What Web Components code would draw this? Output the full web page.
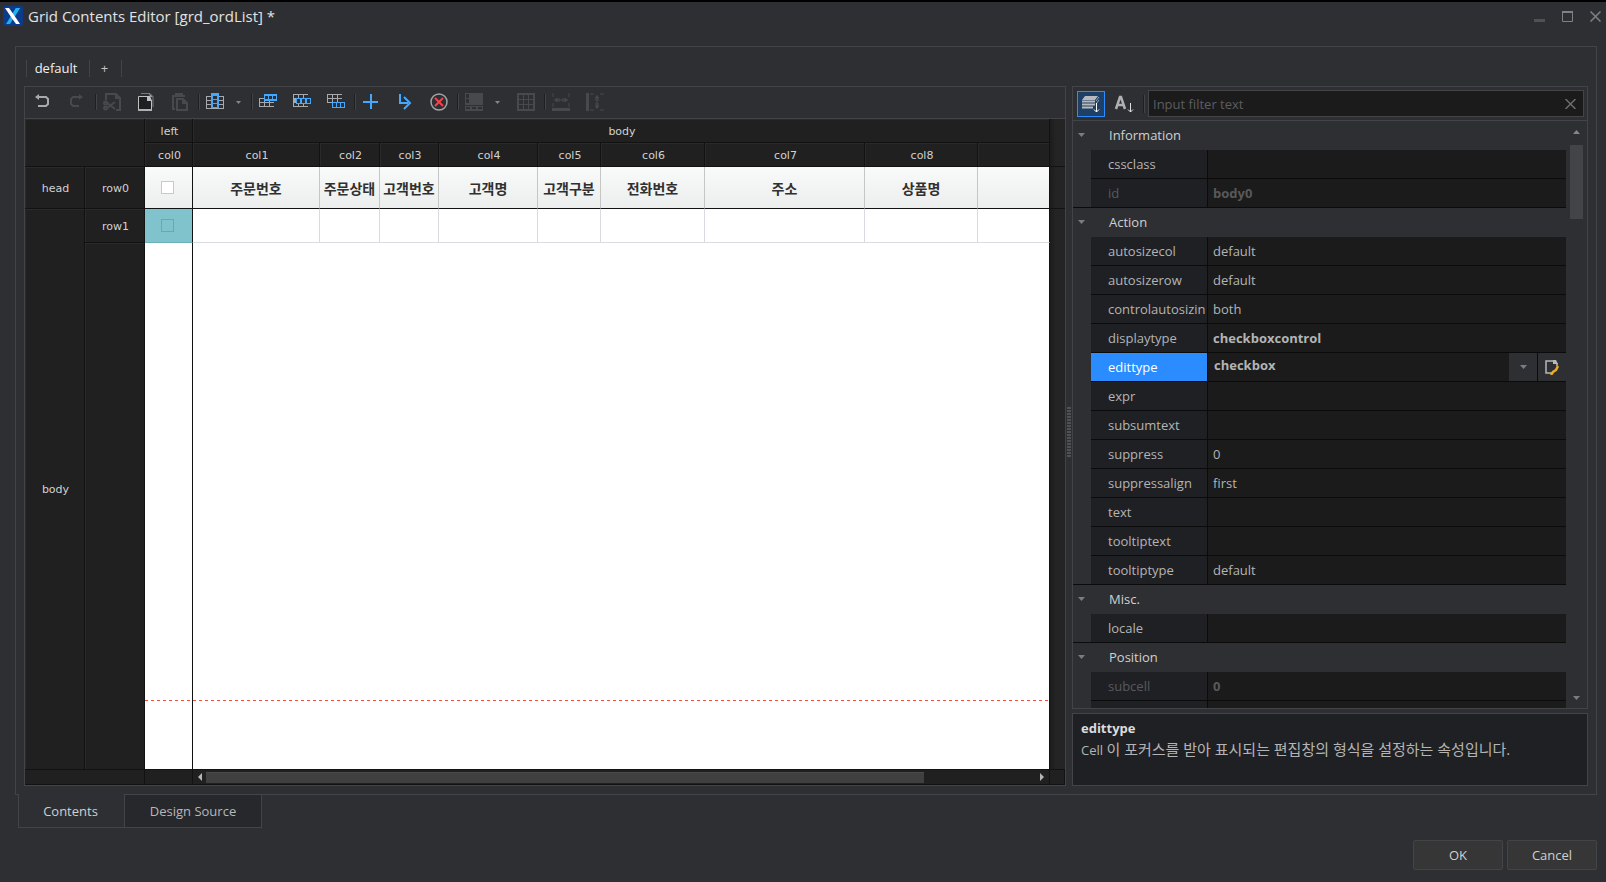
<!DOCTYPE html>
<html lang="ko">
<head>
<meta charset="utf-8">
<title>Grid Contents Editor</title>
<style>
  body { margin: 0; background: #2e2f33; color: #c8c8c8; font: 13px/18px "Open Sans", "Noto Sans CJK KR", sans-serif; }
</style>
</head>
<body>
<editor-window></editor-window>

<script>
const BASE = `
  *, *::before, *::after { box-sizing: border-box; }
  button, input, select { font: inherit; color: inherit; margin: 0; }
  button { background: none; border: 0; padding: 0; }
  svg { display: block; }
`;

function define(name, html, setup) {
  const template = document.createElement('template');
  customElements.define(name, class extends HTMLElement {
    constructor() {
      super();
      const root = this.attachShadow({ mode: 'open' });
      const markup = typeof html === 'function' ? html(this) : html;
      template.innerHTML = `<style>${BASE}</style>${markup}`;
      root.append(template.content.cloneNode(true));
    }
  });
}

/* ---------- icons, on an 18 x 18 pixel grid ---------- */
const GRAY = '#a9a9a9', DIM = '#48494c', BLUE = '#44a8ff';
/* a block of cells: each cell is cut out of a filled rectangle */
const cells = (x, y, xs, ys, w, h, total, color) => {
  let svg = `<path d="M${x} ${y}h${total[0]}v${total[1]}h${-total[0]}z" fill="${color}"/>`;
  for (const cx of xs) for (const cy of ys) svg += `<path d="M${cx} ${cy}h${w}v${h}h${-w}z" fill="#2e2f33"/>`;
  return svg;
};
const ICONS = {
  undo: `<path d="M3 4h9l2 2v5l-2 2H4" fill="none" stroke="${GRAY}" stroke-width="2"/><path d="M1 4l4-3v6z" fill="${GRAY}"/>`,
  redo: `<path d="M12 4H5L3 6v5l2 2h6" fill="none" stroke="${DIM}" stroke-width="2"/><path d="M15 4l-4-3v6z" fill="${DIM}"/>`,
  cut: `<path d="M3 7V1h10l4 4v12h-4" fill="none" stroke="${DIM}" stroke-width="2"/><path d="M12 1v5h5" fill="${DIM}"/><path d="M3 9l9 7M3 16l9-7" stroke="${DIM}" stroke-width="2"/><circle cx="2.500" cy="10" r="1.500" fill="none" stroke="${DIM}" stroke-width="2"/><circle cx="2.500" cy="15" r="1.500" fill="none" stroke="${DIM}" stroke-width="2"/>`,
  copy: `<path d="M4 .5h9l3 3V14" fill="none" stroke="#77787a" stroke-width="1"/><path d="M1.500 3.500h9l4 4v9h-13z" fill="#1e1f22" stroke="#c0c0c0"/><path d="M1 16h14v2H1z" fill="#b0b0b0"/><path d="M10 3v5h5l-2-5z" fill="#c0c0c0"/><path d="M12 0l4 4h-3z" fill="#9a9a9c"/>`,
  paste: `<path d="M4 16H2V3h12" fill="none" stroke="${DIM}" stroke-width="2"/><path d="M4 0h8v3H4z" fill="${DIM}"/><path d="M6 6h6l4 4v7H6z" fill="none" stroke="${DIM}" stroke-width="2"/><path d="M11 5v6h5z" fill="${DIM}"/>`,
  columns: cells(0, 3, [1, 13], [4, 8, 12], 4, 3, [18, 13], GRAY) + cells(5, 0, [7], [3, 7, 11], 4, 3, [8, 15], BLUE),
  rowTop: cells(0, 5, [1, 6, 11], [6, 10], 4, 3, [15, 9], GRAY) + cells(5, 1, [6, 10, 14], [3], 3, 3, [13, 7], BLUE),
  rowMid: cells(0, 1, [1, 6, 11], [2, 10], 4, 3, [15, 13], GRAY) + cells(3, 5, [4, 9, 14], [6], 3, 4, [15, 6], BLUE),
  rowBottom: cells(0, 1, [1, 6, 11], [2, 6], 4, 3, [15, 9], GRAY) + cells(5, 9, [6, 10, 14], [10], 3, 4, [13, 6], BLUE),
  plus: `<path d="M9 1v15M1 9h15" stroke="${BLUE}" stroke-width="2"/>`,
  into: `<path d="M4 1v9h8" fill="none" stroke="${BLUE}" stroke-width="2"/><path d="M8 4l6 6-6 6" fill="none" stroke="${BLUE}" stroke-width="2"/>`,
  remove: `<circle cx="9" cy="9" r="8" fill="none" stroke="#a4a4a4" stroke-width="1.500"/><path d="M5 5l8 8M13 5l-8 8" stroke="#ff3d4d" stroke-width="2"/>`,
  merge: cells(0, 0, [1], [1, 6], 3, 4, [5, 12], DIM) + `<path d="M5 0h13v12H5z" fill="${DIM}"/>` + cells(0, 13, [1, 7, 13], [14], 4, 2, [18, 5], DIM),
  split: cells(0, 0, [2, 7, 12], [2, 7, 12], 4, 4, [18, 18], DIM),
  fitWidth: `<path d="M0 15h18v3H0z" fill="${DIM}"/><path d="M1 0v4M1 10v4M17 0v4M17 10v4" stroke="${DIM}"/><path d="M2 7h14M3 7l2-2v4zM15 7l-2-2v4zM7 5v4M11 5v4" stroke="${DIM}" fill="${DIM}"/>`,
  fitHeight: `<path d="M0 0h3v18H0z" fill="${DIM}"/><path d="M4 1h4M14 1h4M4 17h4M14 17h4" stroke="${DIM}"/><path d="M11 2v14M11 3l-2 2h4zM11 15l-2-2h4zM9 7h4M9 11h4" stroke="${DIM}" fill="${DIM}"/>`
};
const icon = (key) => `<svg width="18" height="18" viewBox="0 0 18 18" aria-hidden="true">${ICONS[key]}</svg>`;
const chevron = `<svg width="7" height="4" viewBox="0 0 7 4" aria-hidden="true"><path d="M0 0h7L3.500 4z" fill="#7b7c80"/></svg>`;
const smallChevron = `<svg width="5" height="3" viewBox="0 0 5 3" aria-hidden="true"><path d="M0 0h5L2.500 3z" fill="#85868a"/></svg>`;

define('tool-button', el => `
  <style>
    :host { display: block; width: 18px; height: 18px; }
    :host([kind="menu"]) { width: 8px; margin-left: -6px; }
    button { display: grid; place-items: center; width: 100%; height: 100%; }
  </style>
  <button type="button" aria-label="${el.getAttribute('label')}">${el.getAttribute('kind') === 'menu' ? smallChevron : icon(el.getAttribute('icon'))}</button>`);

define('tool-separator', `
  <style>:host { display: block; width: 2px; height: 16px; margin: 0 -10px 0 -7px; background: #1f2022; border-right: 1px solid #424346; }</style>`);

const tool = (key, label) => `<tool-button icon="${key}" label="${label}"></tool-button>`;
const menu = label => `<tool-button kind="menu" label="${label}"></tool-button>`;
const sep = '<tool-separator></tool-separator>';
define('edit-toolbar', () => `
  <style>:host { display: flex; align-items: center; gap: 16px; height: 32px; padding: 0 0 1px 9px; border-bottom: 1px solid #434448; }</style>
  ${tool('undo', 'Undo')}${tool('redo', 'Redo')}${sep}
  ${tool('cut', 'Cut')}${tool('copy', 'Copy')}${tool('paste', 'Paste')}${sep}
  ${tool('columns', 'Add column')}${menu('Column options')}${sep}
  ${tool('rowTop', 'Add head row')}${tool('rowMid', 'Add body row')}${tool('rowBottom', 'Add summary row')}${sep}
  ${tool('plus', 'Add')}${tool('into', 'Insert')}${tool('remove', 'Delete')}${sep}
  ${tool('merge', 'Merge cells')}${menu('Merge options')}${tool('split', 'Split cells')}${sep}
  ${tool('fitWidth', 'Fit width')}${tool('fitHeight', 'Fit height')}`);

/* ---------- grid being edited ---------- */
const COLUMNS = [['주문번호', 127], ['주문상태', 60], ['고객번호', 59], ['고객명', 99], ['고객구분', 63], ['전화번호', 104], ['주소', 160], ['상품명', 113]];
define('contents-grid', () => `
  <style>
    :host { display: grid; min-height: 0; flex: 1; background: #202020; }
    table { width: 100%; height: 100%; table-layout: fixed; border-collapse: separate; border-spacing: 0; }
    th, td { padding: 0; text-align: center; vertical-align: middle; overflow: hidden; white-space: nowrap; border: solid #121212; border-width: 0 1px 1px 0; }
    th { padding: 2px 0 0 2px; font: 11px/14px "DejaVu Sans", sans-serif; color: #d2d2d2; background: #202020; box-shadow: inset 1px 1px #2a2a2a; }
    .h24 { height: 24px; }
    .h42 { height: 42px; }
    .h34 { height: 34px; }
    .h15 { height: 15px; }
    .head td { background: linear-gradient(#f9fafa, #eceeee); border-right-color: #c6c6c6; font: bold 14px/18px "Noto Sans CJK KR", sans-serif; color: #303030; }
    .row td { background: #fff; border-color: #d9dbe1; }
    .canvas td { background: #fff repeating-linear-gradient(90deg, #f4503c 0 3px, #fff 3px 6px) 0 calc(100% - 68px) / 100% 1px no-repeat; }
    tr td.fixed, tr td.last { border-right: 1px solid #121212; }
    .row td.selected { background: #80c3cd; border-bottom-color: #6cb0ba; }
    tr td.gutter { background: linear-gradient(90deg, #1c1c1c, #242424 6px); border-color: transparent; border-right-width: 0; }
    tr.line td.gutter { border-bottom-color: #121212; }
    input { appearance: none; display: block; width: 13px; height: 13px; margin: 0 auto; border: 1px solid #c9c9c9; background: #fff; }
    .fixed label { display: block; padding-right: 2px; }
    .selected input { background: transparent; border-color: #66a9b3; }
    .foot td { background: #202020; }
    .scroll { display: flex; align-items: center; height: 14px; padding: 0 5px; gap: 4px; }
    .track { flex: 1; height: 11px; }
    .track i { display: block; width: 718px; max-width: 88%; height: 11px; background: #404040; border-top: 1px solid #4a4a4a; }
  </style>
  <table>
    <colgroup><col style="width:60px"><col style="width:60px"><col style="width:48px">${COLUMNS.map(c => `<col style="width:${c[1]}px">`).join('')}<col><col style="width:15px"></colgroup>
    <tbody>
      <tr class="h24"><th colspan="2" rowspan="2"></th><th>left</th><th colspan="9">body</th><td class="gutter"></td></tr>
      <tr class="h24 line"><th>col0</th>${COLUMNS.map((c, i) => `<th>col${i + 1}</th>`).join('')}<th></th><td class="gutter"></td></tr>
      <tr class="h42 head line"><th>head</th><th>row0</th><td class="fixed"><label><input type="checkbox" aria-label="Select all"></label></td>${COLUMNS.map(c => `<td>${c[0]}</td>`).join('')}<td class="last"></td><td class="gutter"></td></tr>
      <tr class="h34 row"><th rowspan="2">body</th><th>row1</th><td class="fixed selected"><label><input type="checkbox" aria-label="Select row"></label></td>${COLUMNS.map(() => '<td></td>').join('')}<td class="last"></td><td class="gutter"></td></tr>
      <tr class="canvas line"><th></th><td class="fixed"></td><td colspan="9" class="last"></td><td class="gutter"></td></tr>
      <tr class="h15 foot"><td colspan="2"></td><td></td><td colspan="9"><div class="scroll">
        <svg width="4" height="8" viewBox="0 0 4 8"><path d="M4 0v8L0 4z" fill="#b5b5b5"/></svg>
        <div class="track"><i></i></div>
        <svg width="4" height="8" viewBox="0 0 4 8"><path d="M0 0v8l4-4z" fill="#b5b5b5"/></svg>
      </div></td><td></td></tr>
    </tbody>
  </table>`);

/* ---------- property sheet ---------- */
const GROUPS = [
  ['Information', [['cssclass', ''], ['id', 'body0', 'off']]],
  ['Action', [['autosizecol', 'default'], ['autosizerow', 'default'], ['controlautosizin', 'both'], ['displaytype', 'checkboxcontrol', 'set'],
    ['edittype', 'checkbox', 'active'], ['expr', ''], ['subsumtext', ''], ['suppress', '0'], ['suppressalign', 'first'], ['text', ''], ['tooltiptext', ''], ['tooltiptype', 'default']]],
  ['Misc.', [['locale', '']]],
  ['Position', [['subcell', '0', 'off'], ['', '']]]
];
const editor = value => `<div class="editor">
  <select aria-label="edittype"><option>${value}</option></select><span class="arrow">${chevron}</span>
  <button type="button" aria-label="Edit value"><svg width="14" height="16" viewBox="0 0 14 16"><path d="M7 14H1V2h8l3 3v2" fill="none" stroke="#b8b8b8" stroke-width="1.500"/><path d="M8 1v4h5l-2-4z" fill="#b8b8b8"/><path d="M13 7l-2 4-3 2-2 3" fill="none" stroke="#f0aa22" stroke-width="2.500"/></svg></button></div>`;

define('property-group', el => {
  const [title, rows] = GROUPS[+el.getAttribute('index')];
  return `
  <style>
    :host { display: block; border-bottom: 1px solid #0b0b0c; }
    .title { display: flex; align-items: center; width: 100%; height: 29px; padding: 0 0 2px 5px; gap: 24px; color: #d0d0d0; text-align: left; }
    .body { padding-left: 18px; }
    table { width: 100%; table-layout: fixed; border-collapse: separate; border-spacing: 0; }
    th, td { height: 29px; padding: 0 0 0 5px; border-bottom: 1px solid #0b0b0c; white-space: nowrap; text-align: left; font-weight: normal; color: #b4b4b4; }
    th { width: 117px; padding-left: 17px; background: #1f2024; border-right: 1px solid #0b0b0c; }
    td { background: #1b1b1b; }
    tr:last-child > * { height: 28px; border-bottom: 0; }
    .off > * { color: #58595b; }
    .off td, .set td, .active td { font-weight: bold; }
    .active th { background: #2a8cff; color: #fff; }
    .active td { padding: 0; }
    .editor { display: grid; grid-template-columns: 1fr 29px 28px; height: 28px; }
    select { grid-area: 1 / 1 / 2 / 3; appearance: none; border: 0; background: #1b1b1b; padding: 0 6px 4px; height: 28px; border-radius: 0; }
    .arrow { grid-area: 1 / 2; display: grid; place-items: center; background: #2e2f33; border-right: 1px solid #0b0b0c; pointer-events: none; }
    .editor button { display: grid; place-items: center; background: #2e2f33; }
  </style>
  <button type="button" class="title">${chevron}<span>${title}</span></button>
  <div class="body"><table>${rows.map(([k, v, c]) => `<tr class="${c || ''}"><th scope="row">${k}</th><td>${c === 'active' ? editor(v) : v}</td></tr>`).join('')}</table></div>`;
});

define('property-panel', () => `
  <style>
    :host { display: flex; flex-direction: column; gap: 4px; width: 516px; min-height: 0; }
    .sheet { flex: 1; min-height: 0; display: flex; flex-direction: column; border: 1px solid #434448; }
    .filter { display: flex; align-items: center; height: 34px; flex: none; padding: 0 3px 0 4px; border-bottom: 1px solid #434448; }
    .filter > button { width: 28px; height: 26px; display: grid; place-items: center; }
    .filter > button.on { background: #1f4066; border: 1px solid #2a8cff; }
    .filter > button.alpha { width: 38px; }
    .filter > i { width: 2px; height: 18px; margin-right: 3px; background: #1f2022; border-right: 1px solid #424346; }
    .box { flex: 1; display: flex; align-items: center; height: 27px; background: #1b1b1b; border: 1px solid #434448; padding: 0 7px 0 4px; }
    input { flex: 1; min-width: 0; padding: 0; background: none; border: 0; outline: 0; }
    input::placeholder { color: #5c5d60; opacity: 1; }
    .view { flex: 1; min-height: 0; display: flex; }
    .list { flex: 1; overflow: hidden; }
    .scroll { width: 21px; display: flex; flex-direction: column; align-items: center; padding: 9px 0 8px; }
    .thumb { width: 13px; height: 74px; margin: 11px 0 auto; background: #434448; }
    .note { height: 73px; padding: 5px 8px; border: 1px solid #434448; background: #1f2024; color: #b4b4b4; line-height: 24px; }
    .note strong { display: block; line-height: 18px; color: #dcdcdc; }
    .note p { margin: 0; }
    .note span { font-size: 15px; }
  </style>
  <section class="sheet">
    <div class="filter">
      <button type="button" class="on" aria-label="Group by category"><svg width="20" height="18" viewBox="0 0 20 18"><path d="M4 1h13l-3 4H1z" fill="#b9b9bb"/><path d="M1 6.500h13M1 9.500h13M1 12.500h11" stroke="#b9b9bb" stroke-width="2"/><path d="M18 2l-3 4M18 5l-3 4" stroke="#8fa0b4"/><path d="M15.500 8v9M13 14.500l2.500 2.500 2.500-2.500" fill="none" stroke="#fff"/></svg></button>
      <button type="button" class="alpha" aria-label="Sort by name"><svg width="20" height="18" viewBox="0 0 20 18"><path d="M2 14L6 2h1l4 12M4 10h5" fill="none" stroke="#b0b0b0" stroke-width="2.500"/><path d="M16.500 8v9M14 14.500l2.500 2.500 2.500-2.500" fill="none" stroke="#e0e0e0"/></svg></button>
      <i></i>
      <label class="box"><input type="text" placeholder="Input filter text" aria-label="Input filter text"><button type="button" aria-label="Clear filter"><svg width="11" height="10" viewBox="0 0 11 10"><path d="M.5 0l10 10M10.500 0l-10 10" stroke="#6c6d70" stroke-width="1.500"/></svg></button></label>
    </div>
    <div class="view">
      <div class="list">${GROUPS.map((g, i) => `<property-group index="${i}"></property-group>`).join('')}</div>
      <div class="scroll"><svg width="7" height="4" viewBox="0 0 7 4"><path d="M0 4h7L3.500 0z" fill="#85868a"/></svg><div class="thumb"></div>${chevron}</div>
    </div>
  </section>
  <section class="note"><strong>edittype</strong><p>Cell <span>이 포커스를 받아 표시되는 편집창의 형식을 설정하는 속성입니다.</span></p></section>`);

/* ---------- window ---------- */
define('title-bar', `
  <style>
    :host { display: flex; align-items: center; height: 28px; margin-bottom: 16px; padding: 0 5px 0 3px; color: #e2e2e2; }
    h1 { flex: 1; margin: 0 0 0 5px; font: 15px/20px "Open Sans", sans-serif; }
    .logo { align-self: flex-start; margin-top: 4px; }
    nav { display: flex; gap: 17px; align-items: center; }
  </style>
  <svg class="logo" width="20" height="20" viewBox="0 0 20 20" aria-hidden="true"><rect width="20" height="20" rx="2" fill="#0d3b8c"/><path d="M13 2h4L7 18H3z" fill="#1db0ee"/><path d="M2 2h4l5 7 6 9h-4L8 11z" fill="#fff"/><path d="M13 2h4l-5 8-2-3z" fill="#22b4f0"/></svg>
  <h1><slot></slot></h1>
  <nav>
    <button type="button" aria-label="Minimize"><svg width="11" height="11"><path d="M0 8h11v3H0z" fill="#505154"/></svg></button>
    <button type="button" aria-label="Maximize"><svg width="11" height="11"><path d="M.5 1v9.500h10V1" fill="none" stroke="#808184"/><path d="M0 1h11" stroke="#808184" stroke-width="2"/></svg></button>
    <button type="button" aria-label="Close"><svg width="11" height="11"><path d="M.5 .5l10 10M10.500 .5l-10 10" stroke="#808184" stroke-width="1.500"/></svg></button>
  </nav>`);

define('format-tabs', `
  <style>
    :host { display: flex; align-items: center; height: 39px; padding: 3px 0 0 2px; }
    button { height: 17px; line-height: 17px; border-left: 1px solid #434448; color: #f0f0f0; text-align: center; }
    .tab { width: 63px; padding-right: 4px; }
    .add { width: 33px; padding-right: 2px; border-right: 1px solid #434448; color: #c4c4c4; }
  </style>
  <button type="button" class="tab">default</button><button type="button" class="add" aria-label="+">+</button>`);

define('page-tabs', `
  <style>
    :host { display: flex; margin: -1px 0 0 18px; }
    button { height: 34px; border: 1px solid #434448; color: #b8b8b8; }
    .current { width: 106px; padding-right: 2px; border-width: 0 0 1px 1px; background: #2e2f33; color: #d0d0d0; }
    .other { width: 138px; background: #27282c; }
  </style>
  <button type="button" class="current">Contents</button><button type="button" class="other">Design Source</button>`);

define('dialog-actions', `
  <style>
    :host { display: flex; justify-content: flex-end; gap: 4px; padding: 12px 9px; }
    button { width: 90px; height: 30px; border: 1px solid #434448; border-radius: 2px; background: #363636; color: #d0d0d0; }
  </style>
  <button type="button">OK</button><button type="button">Cancel</button>`);

define('split-handle', `
  <style>
    :host { display: flex; align-items: center; justify-content: center; width: 6px; padding-bottom: 8px; }
    i { width: 4px; height: 50px; background: radial-gradient(circle at 1px 1px, #505154 0 1px, transparent 1px) 0 0 / 2px 3px; }
  </style><i></i>`);

define('editor-window', `
  <style>
    :host { display: flex; flex-direction: column; height: 100vh; min-height: 480px; border-top: 2px solid #000; box-sizing: border-box; background: #2e2f33; }
    main { flex: 1; min-height: 0; display: flex; flex-direction: column; margin: 0 9px 0 15px; padding: 0 8px 8px; border: 1px solid #434448; }
    .panes { flex: 1; min-height: 0; display: flex; }
    .left { flex: 1; min-width: 0; display: flex; flex-direction: column; border: 1px solid #434448; }
  </style>
  <title-bar>Grid Contents Editor [grd_ordList] *</title-bar>
  <main>
    <format-tabs></format-tabs>
    <div class="panes">
      <section class="left"><edit-toolbar></edit-toolbar><contents-grid></contents-grid></section>
      <split-handle></split-handle>
      <property-panel></property-panel>
    </div>
  </main>
  <page-tabs></page-tabs>
  <dialog-actions></dialog-actions>`);
</script>
</body>
</html>
